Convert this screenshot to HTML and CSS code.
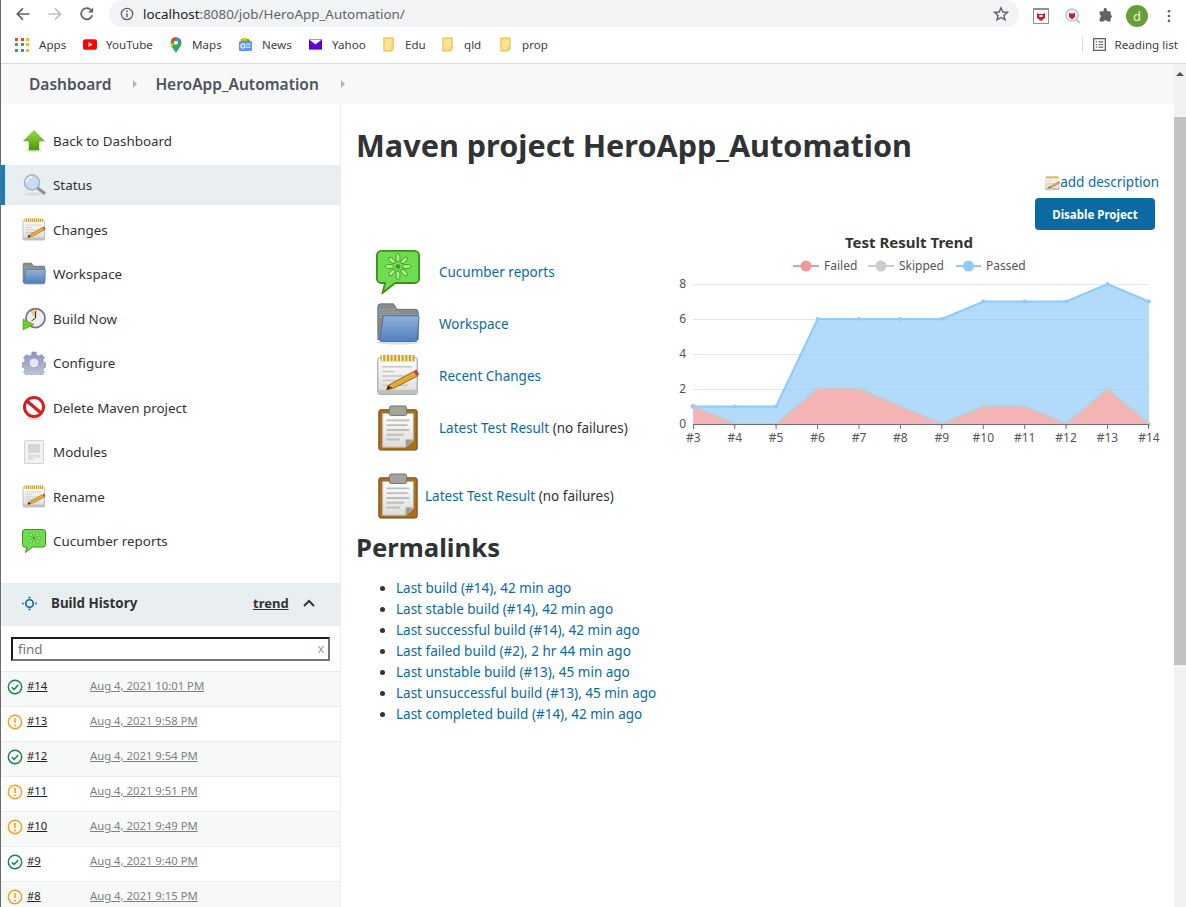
FILE: index.html
```html
<!DOCTYPE html>
<html lang="en">
<head>
<meta charset="utf-8">
<title>HeroApp_Automation</title>
<link rel="stylesheet" href="styles.css">
</head>
<body>
<svg class="defs" width="0" height="0" aria-hidden="true">
  <defs>
    <linearGradient id="gArrow" x1="0" y1="0" x2="0" y2="1"><stop offset="0" stop-color="#9bd84a"/><stop offset="1" stop-color="#4e9a06"/></linearGradient>
    <linearGradient id="gFolder" x1="0" y1="0" x2="0" y2="1"><stop offset="0" stop-color="#8fb2dc"/><stop offset="1" stop-color="#4f7fbd"/></linearGradient>
    <linearGradient id="gPaper" x1="0" y1="0" x2="0" y2="1"><stop offset="0" stop-color="#ffffff"/><stop offset="1" stop-color="#dcdcd8"/></linearGradient>
    <linearGradient id="gGear" x1="0" y1="0" x2="0" y2="1"><stop offset="0" stop-color="#8c94c0"/><stop offset="1" stop-color="#c4c7dc"/></linearGradient>
    <symbol id="i-up" viewBox="0 0 48 48">
      <ellipse cx="24" cy="43" rx="17" ry="3" fill="#ddd"/>
      <path d="M24 3 45 24H34V42H14V24H3Z" fill="url(#gArrow)" stroke="#5a9f14" stroke-width="1"/>
    </symbol>
    <symbol id="i-search" viewBox="0 0 48 48">
      <ellipse cx="22" cy="42" rx="17" ry="3.5" fill="#ddd"/>
      <path d="M30 29 44 40" stroke="#8a8f94" stroke-width="6" stroke-linecap="round"/>
      <circle cx="20" cy="19" r="15" fill="#c7dcf2" stroke="#aab4bd" stroke-width="3"/>
      <path d="M9 18a11 11 0 0 1 11-10" stroke="#fff" stroke-width="3" fill="none"/>
    </symbol>
    <symbol id="i-note" viewBox="0 0 48 48">
      <rect x="2" y="4" width="43" height="40" rx="2" fill="url(#gPaper)" stroke="#8f8f8b"/>
      <rect x="2" y="39" width="43" height="5" fill="#c0c0bc"/>
      <rect x="5" y="1" width="37" height="7" fill="#c8a43c"/>
      <path d="M7 1v7M11 1v7M15 1v7M19 1v7M23 1v7M27 1v7M31 1v7M35 1v7M39 1v7" stroke="#fff3b0" stroke-width="1.6"/>
      <path d="M7 14h32M7 19h13M7 24h25M7 29h16M7 34h28" stroke="#c6c6c2" stroke-width="1.6"/>
      <path d="M14 34 41 19l4 5-25 13-8 2Z" fill="#e9a93a" stroke="#8f5f12" stroke-width="1"/>
      <path d="M41 19l4 5 2-2-3-5Z" fill="#d63b3b"/>
      <path d="M11 39l2-5 5 3Z" fill="#4a3212"/>
    </symbol>
    <symbol id="i-folder" viewBox="0 0 48 48">
      <ellipse cx="24" cy="44" rx="23" ry="2.5" fill="#ddd"/>
      <path d="M2 5a3 3 0 0 1 3-3h14l4 6h20a3 3 0 0 1 3 3v30H2Z" fill="#888a8c" stroke="#6a6c6e"/>
      <path d="M3 8h18M3 11h22M3 14h40M3 17h40" stroke="#a2a4a6"/>
      <path d="M8 15h38l1 1-2 25a2 2 0 0 1-2 2H6a2 2 0 0 1-2-2Z" fill="url(#gFolder)" stroke="#3e6ba8"/>
    </symbol>
    <symbol id="i-build" viewBox="0 0 48 48">
      <circle cx="27" cy="22" r="19" fill="#eeedf0" stroke="#7a6f96" stroke-width="3.5"/>
      <path d="M27 22 18 8a17 17 0 0 1 11-3Z" fill="#e8d27a" stroke="#a08b3a"/>
      <path d="M27 22 19 28M27 22 27 9" stroke="#333" stroke-width="2" fill="none"/>
      <path d="M2 24 24 35 2 46Z" fill="#6ccf24" stroke="#3e8f0e"/>
    </symbol>
    <symbol id="i-gear" viewBox="0 0 48 48">
      <path d="M20 2h8l1 6 5 2 5-3 6 6-3 5 2 5 6 1v8l-6 1-2 5 3 5-6 6-5-3-5 2-1 6h-8l-1-6-5-2-5 3-6-6 3-5-2-5-6-1v-8l6-1 2-5-3-5 6-6 5 3 5-2Z" fill="url(#gGear)" stroke="#7f85ad"/>
      <circle cx="24" cy="24" r="10" fill="#e6e6f0" stroke="#9a9ebd" stroke-width="2"/>
    </symbol>
    <symbol id="i-del" viewBox="0 0 48 48">
      <ellipse cx="24" cy="45" rx="17" ry="3" fill="#ddd"/>
      <circle cx="24" cy="22" r="19" fill="#fff" stroke="#d32020" stroke-width="6"/>
      <path d="M11 11 37 33" stroke="#d32020" stroke-width="6.5"/>
    </symbol>
    <symbol id="i-mod" viewBox="0 0 48 48">
      <rect x="5" y="1" width="38" height="46" rx="1.5" fill="#f2f2f2" stroke="#c8c8c8" stroke-width="1.5"/>
      <rect x="12" y="8" width="24" height="18" fill="#d6d6d6"/>
      <rect x="12" y="29" width="11" height="11" fill="#dedede"/>
      <rect x="24" y="29" width="12" height="6" fill="#dedede"/>
    </symbol>
    <symbol id="i-cuke" viewBox="0 0 48 48">
      <path d="M6 1h36a5 5 0 0 1 5 5v25a5 5 0 0 1-5 5H21L7 47l3-11H6a5 5 0 0 1-5-5V6a5 5 0 0 1 5-5Z" fill="#6fdc52" stroke="#3f8f1c" stroke-width="2"/>
      <g fill="#a8f28c" stroke="#3c9a1e" stroke-width="1">
        <ellipse cx="24" cy="8.500" rx="2.200" ry="4.500"/>
        <ellipse cx="24" cy="27.500" rx="2.200" ry="4.500"/>
        <ellipse cx="14.500" cy="18" rx="4.500" ry="2.200"/>
        <ellipse cx="33.500" cy="18" rx="4.500" ry="2.200"/>
        <ellipse cx="17.300" cy="11.300" rx="2.200" ry="4.500" transform="rotate(-45 17.300 11.300)"/>
        <ellipse cx="30.700" cy="11.300" rx="2.200" ry="4.500" transform="rotate(45 30.700 11.300)"/>
        <ellipse cx="17.300" cy="24.700" rx="2.200" ry="4.500" transform="rotate(45 17.300 24.700)"/>
        <ellipse cx="30.700" cy="24.700" rx="2.200" ry="4.500" transform="rotate(-45 30.700 24.700)"/>
      </g>
      <circle cx="24" cy="18" r="2.500" fill="#3c9a1e"/>
    </symbol>
    <symbol id="i-clip" viewBox="3 0 42 48">
      <rect x="4" y="5" width="40" height="42" rx="2" fill="#a86f1c" stroke="#6f4710"/>
      <path d="M8 9h32v28l-8 7H8Z" fill="url(#gPaper)" stroke="#bbb"/>
      <path d="M12 16h24M12 21h22M12 26h24M12 31h18M12 36h14" stroke="#bdbdbd" stroke-width="2"/>
      <path d="M32 44V36h8Z" fill="#9b9b9b"/>
      <rect x="15" y="1" width="18" height="10" rx="2" fill="#a3a39c" stroke="#74746e"/>
    </symbol>
    <symbol id="i-ok" viewBox="0 0 16 16">
      <circle cx="8" cy="8" r="6.7" fill="none" stroke="#138347" stroke-width="1.4"/>
      <path d="M4.8 8.2 7.1 10.4 11.2 6" fill="none" stroke="#138347" stroke-width="1.5"/>
    </symbol>
    <symbol id="i-warn" viewBox="0 0 16 16">
      <circle cx="8" cy="8" r="6.7" fill="none" stroke="#fe9d17" stroke-width="1.4"/>
      <path d="M8 4v5" stroke="#fe9d17" stroke-width="1.6"/>
      <circle cx="8" cy="11.4" r="1" fill="#fe9d17"/>
    </symbol>
    <symbol id="i-bfold" viewBox="0 0 12 16">
      <path d="M1 1h10v12l-2 2H1Z" fill="#fde293" stroke="#e6c14f" stroke-width="1.2"/>
      <path d="M11 11H9v3" fill="none" stroke="#e6c14f"/>
    </symbol>
  </defs>
</svg>

<div class="window">
  <header class="chrome">
    <div class="toolbar">
      <div class="nav-icons">
        <svg class="ico16" viewBox="0 0 16 16"><path d="M14.5 8H2.5M8 2.3 2.3 8 8 13.7" fill="none" stroke="#5f6368" stroke-width="1.7"/></svg>
        <svg class="ico16" viewBox="0 0 16 16"><path d="M1.5 8h12M8 2.3 13.7 8 8 13.7" fill="none" stroke="#bdc1c6" stroke-width="1.7"/></svg>
        <svg class="ico16" viewBox="0 0 16 16"><path d="M13.2 9.2A5.6 5.6 0 1 1 11.9 4" fill="none" stroke="#5f6368" stroke-width="1.7"/><path d="M14.2 1.4v5.2H9Z" fill="#5f6368"/></svg>
      </div>
      <div class="omnibox">
        <svg class="ico-info" viewBox="0 0 14 14"><circle cx="7" cy="7" r="5.7" fill="none" stroke="#5f6368" stroke-width="1.3"/><path d="M7 6.2v4" stroke="#5f6368" stroke-width="1.4"/><circle cx="7" cy="4.2" r=".9" fill="#5f6368"/></svg>
        <span class="url"><span class="url-host">localhost</span>:8080/job/HeroApp_Automation/</span>
        <svg class="ico-star" viewBox="0 0 16 16"><path d="M8 1.8 9.8 6l4.6.4-3.5 3 1.1 4.5L8 11.5l-4 2.4L5.100 9.400l-3.500-3L6.200 6Z" fill="none" stroke="#5f6368" stroke-width="1.4"/></svg>
      </div>
      <div class="ext-icons">
        <svg class="ext ext-a" viewBox="0 0 16 16"><rect x=".5" y=".5" width="15" height="15" fill="#fff" stroke="#8a9199"/><rect x="0" y="0" width="16" height="2" fill="#8a9199"/><path d="M4 5l2 1h4l2-1v5l-4 3-4-3Z" fill="#c8202f"/><rect x="6.500" y="7" width="3" height="2" fill="#fff"/></svg>
        <svg class="ext ext-b" viewBox="0 0 16 16"><circle cx="7" cy="7" r="6" fill="#fff" stroke="#b9c6cf" stroke-width="1.600"/><path d="M11.500 11.500 15 15" stroke="#b9c6cf" stroke-width="1.800"/><path d="M4 4.500l1.500 1h3l1.500-1V9l-3 2.500L4 9Z" fill="#c8202f"/></svg>
        <svg class="ext ext-c" viewBox="0 0 16 16"><path d="M6 1.500a1.800 1.800 0 0 1 3.500 0V3.500h4v3.700a2 2 0 0 1 0 3.800v3.500H9.800a2 2 0 0 0-3.800 0H1.800v-3.800a2 2 0 0 0 0-3.700V3.500H6Z" fill="#5f6368"/></svg>
        <span class="avatar">d</span>
        <svg class="ext ext-d" viewBox="0 0 4 16"><circle cx="2" cy="2.500" r="1.500" fill="#5f6368"/><circle cx="2" cy="8" r="1.500" fill="#5f6368"/><circle cx="2" cy="13.500" r="1.500" fill="#5f6368"/></svg>
      </div>
    </div>
    <div class="bookmarks">
      <a class="bm bm-apps"><span class="apps-grid"><i class="c-r"></i><i class="c-r"></i><i class="c-y"></i><i class="c-b"></i><i class="c-g"></i><i class="c-y"></i><i class="c-g"></i><i class="c-b"></i><i class="c-y"></i></span>Apps</a>
      <a class="bm bm-yt"><svg class="bm-ico" viewBox="0 0 16 12"><rect width="16" height="12" rx="3" fill="#f00"/><path d="M6.300 3.200 11 6 6.300 8.800Z" fill="#fff"/></svg>YouTube</a>
      <a class="bm bm-maps"><svg class="bm-ico bm-pin" viewBox="0 0 12 16"><path d="M6 16C3 11 .5 9 .5 5.700a5.500 5.500 0 0 1 11 0C11.500 9 9 11 6 16Z" fill="#34a853"/><path d="M1 3.500A5.500 5.500 0 0 1 6 .2V4Z" fill="#ea4335"/><path d="M6 .2a5.500 5.500 0 0 1 4.500 2.500L8 5Z" fill="#4285f4"/><path d="M.5 5.700 4 7 2 10C1 8.500.5 7 .5 5.700Z" fill="#fbbc04"/><circle cx="6" cy="5.700" r="2" fill="#fff"/></svg>Maps</a>
      <a class="bm bm-news"><svg class="bm-ico" viewBox="0 0 14 14"><path d="M2 1h8l2 2v2H2Z" fill="#34a853"/><path d="M3 0h5l1 3H3Z" fill="#fbbc04"/><rect y="3.500" width="14" height="10.500" rx="1" fill="#5e97f6"/><rect x="7.500" y="6" width="5" height="1.500" fill="#cfe0fb"/><rect x="7.500" y="9" width="5" height="1.500" fill="#cfe0fb"/><circle cx="4.200" cy="8.500" r="2.200" fill="none" stroke="#fff" stroke-width="1.200"/></svg>News</a>
      <a class="bm bm-yahoo"><svg class="bm-ico" viewBox="0 0 14 11"><rect width="14" height="11" fill="#5f01d1"/><path d="M.5.500 7 5.500 13.500.500" fill="#fff"/></svg>Yahoo</a>
      <a class="bm bm-f1"><svg class="bm-ico bm-fold"><use href="#i-bfold"/></svg>Edu</a>
      <a class="bm bm-f2"><svg class="bm-ico bm-fold"><use href="#i-bfold"/></svg>qld</a>
      <a class="bm bm-f3"><svg class="bm-ico bm-fold"><use href="#i-bfold"/></svg>prop</a>
      <div class="reading">
        <svg class="bm-ico rl-ico" viewBox="0 0 14 14"><rect x=".7" y=".7" width="12.600" height="12.600" fill="none" stroke="#5f6368" stroke-width="1.400"/><path d="M3 4.200h1.500M6 4.200h5M3 7h1.500M6 7h5M3 9.800h1.500M6 9.800h5" stroke="#5f6368" stroke-width="1.300"/></svg>
        Reading list
      </div>
    </div>
  </header>

  <div class="viewport">
    <div class="page">
      <nav class="breadcrumb">
        <a class="crumb crumb-first">Dashboard</a><span class="tri"></span>
        <a class="crumb">HeroApp_Automation</a><span class="tri"></span>
      </nav>
      <div class="columns">
        <aside class="sidebar">
          <ul class="tasks">
            <li class="task"><svg class="task-ico"><use href="#i-up"/></svg>Back to Dashboard</li>
            <li class="task task-active"><svg class="task-ico"><use href="#i-search"/></svg>Status</li>
            <li class="task"><svg class="task-ico"><use href="#i-note"/></svg>Changes</li>
            <li class="task"><svg class="task-ico"><use href="#i-folder"/></svg>Workspace</li>
            <li class="task"><svg class="task-ico"><use href="#i-build"/></svg>Build Now</li>
            <li class="task"><svg class="task-ico"><use href="#i-gear"/></svg>Configure</li>
            <li class="task"><svg class="task-ico"><use href="#i-del"/></svg>Delete Maven project</li>
            <li class="task"><svg class="task-ico"><use href="#i-mod"/></svg>Modules</li>
            <li class="task"><svg class="task-ico"><use href="#i-note"/></svg>Rename</li>
            <li class="task"><svg class="task-ico"><use href="#i-cuke"/></svg>Cucumber reports</li>
          </ul>
          <section class="history">
            <div class="history-head">
              <svg class="hist-ico" viewBox="0 0 16 16"><circle cx="8" cy="8" r="4" fill="none" stroke="#0b6aa2" stroke-width="1.800"/><path d="M8 .3 6.300 2.300h3.400ZM8 15.700l-1.700-2h3.400ZM.5 6.200v3.600l1.700-1.800ZM15.500 6.200v3.600L13.800 8Z" fill="#0b6aa2"/></svg>
              <span class="hist-title">Build History</span>
              <a class="hist-trend">trend</a>
              <svg class="hist-chev" viewBox="0 0 12 8"><path d="M1 7 6 2l5 5" fill="none" stroke="#333" stroke-width="2"/></svg>
            </div>
            <div class="find-wrap">
              <div class="find"><span>find</span><span class="find-x">x</span></div>
            </div>
            <ul class="builds">
              <li class="build"><svg class="b-ico"><use href="#i-ok"/></svg><a class="b-num">#14</a><a class="b-date">Aug 4, 2021 10:01 PM</a></li>
              <li class="build"><svg class="b-ico"><use href="#i-warn"/></svg><a class="b-num">#13</a><a class="b-date">Aug 4, 2021 9:58 PM</a></li>
              <li class="build"><svg class="b-ico"><use href="#i-ok"/></svg><a class="b-num">#12</a><a class="b-date">Aug 4, 2021 9:54 PM</a></li>
              <li class="build"><svg class="b-ico"><use href="#i-warn"/></svg><a class="b-num">#11</a><a class="b-date">Aug 4, 2021 9:51 PM</a></li>
              <li class="build"><svg class="b-ico"><use href="#i-warn"/></svg><a class="b-num">#10</a><a class="b-date">Aug 4, 2021 9:49 PM</a></li>
              <li class="build"><svg class="b-ico"><use href="#i-ok"/></svg><a class="b-num">#9</a><a class="b-date">Aug 4, 2021 9:40 PM</a></li>
              <li class="build"><svg class="b-ico"><use href="#i-warn"/></svg><a class="b-num">#8</a><a class="b-date">Aug 4, 2021 9:15 PM</a></li>
            </ul>
          </section>
        </aside>
        <main class="main">
          <h1 class="title">Maven project HeroApp_Automation</h1>
          <div class="desc-row"><svg class="desc-ico"><use href="#i-note"/></svg><a class="link">add description</a></div>
          <div class="btn-row"><button class="btn">Disable Project</button></div>
          <div class="content-row">
            <div class="actions">
              <div class="action"><svg class="action-ico"><use href="#i-cuke"/></svg><a class="link">Cucumber reports</a></div>
              <div class="action"><svg class="action-ico"><use href="#i-folder"/></svg><a class="link">Workspace</a></div>
              <div class="action"><svg class="action-ico"><use href="#i-note"/></svg><a class="link">Recent Changes</a></div>
              <div class="action"><svg class="action-ico clip-ico"><use href="#i-clip"/></svg><span><a class="link">Latest Test Result</a> (no failures)</span></div>
            </div>
            <div class="chart">
              <svg class="chart-svg" viewBox="0 0 516 225">
                <g stroke="#e0e6f1" stroke-width="1">
                  <path d="M23 59.500H479M23 94.500H479M23 129.500H479M23 164.500H479"/>
                </g>
                <path d="M23.300 181.500 64.700 181.500 106.100 181.500 147.600 94 189 94 230.400 94 271.800 94 313.300 76.500 354.700 76.500 396.100 76.500 437.500 59 479 76.500V199H23.300Z" fill="#90caf9" fill-opacity=".7"/>
                <path d="M23.300 181.500 64.700 199 106.100 199 147.600 164 189 164 230.400 181.500 271.800 199 313.300 181.500 354.700 181.500 396.100 199 437.500 164 479 199H23.300Z" fill="#f4b4b4"/>
                <path d="M23.300 181.500 64.700 181.500 106.100 181.500 147.600 94 189 94 230.400 94 271.800 94 313.300 76.500 354.700 76.500 396.100 76.500 437.500 59 479 76.500" fill="none" stroke="#90caf9" stroke-width="2"/>
                <g fill="#90caf9">
                  <circle cx="23.300" cy="181.500" r="2.500"/><circle cx="64.700" cy="181.500" r="2"/><circle cx="106.100" cy="181.500" r="2"/><circle cx="147.600" cy="94" r="2"/><circle cx="189" cy="94" r="2"/><circle cx="230.400" cy="94" r="2"/><circle cx="271.800" cy="94" r="2"/><circle cx="313.300" cy="76.500" r="2"/><circle cx="354.700" cy="76.500" r="2"/><circle cx="396.100" cy="76.500" r="2"/><circle cx="437.500" cy="59" r="2"/><circle cx="479" cy="76.500" r="2"/>
                </g>
                <path d="M23.300 181.500 64.700 199 106.100 199 147.600 164 189 164 230.400 181.500 271.800 199 313.300 181.500 354.700 181.500 396.100 199 437.500 164 479 199" fill="none" stroke="#c8c8c8" stroke-width="2"/>
                <g fill="#cccccc">
                  <circle cx="64.700" cy="199" r="2"/><circle cx="106.100" cy="199" r="2"/><circle cx="147.600" cy="164" r="2"/><circle cx="189" cy="164" r="2"/><circle cx="230.400" cy="181.500" r="2"/><circle cx="271.800" cy="199" r="2"/><circle cx="313.300" cy="181.500" r="2"/><circle cx="354.700" cy="181.500" r="2"/><circle cx="396.100" cy="199" r="2"/><circle cx="437.500" cy="164" r="2"/><circle cx="479" cy="199" r="2"/>
                </g>
                <path d="M23 199.500H479" stroke="#6e7079" stroke-width="1"/>
                <path d="M23.500 199V204M64.700 199V204M106.100 199V204M147.600 199V204M189 199V204M230.400 199V204M271.800 199V204M313.300 199V204M354.700 199V204M396.100 199V204M437.500 199V204M478.500 199V204" stroke="#6e7079" stroke-width="1"/>
                <text class="chart-title" x="239" y="23" text-anchor="middle">Test Result Trend</text>
                <path d="M123 41H149" stroke="#ef9a9a" stroke-width="2"/><circle cx="136" cy="41" r="5.500" fill="#ef9a9a"/>
                <text class="chart-label" x="154" y="45">Failed</text>
                <path d="M198 41H224" stroke="#cccccc" stroke-width="2"/><circle cx="211" cy="41" r="5.500" fill="#cccccc"/>
                <text class="chart-label" x="229" y="45">Skipped</text>
                <path d="M286 41H311" stroke="#90caf9" stroke-width="2"/><circle cx="298.500" cy="41" r="5.500" fill="#90caf9"/>
                <text class="chart-label" x="316" y="45">Passed</text>
                <g class="chart-label" text-anchor="end">
                  <text x="16" y="63">8</text><text x="16" y="98">6</text><text x="16" y="133">4</text><text x="16" y="168">2</text><text x="16" y="203">0</text>
                </g>
                <g class="chart-label" text-anchor="middle">
                  <text x="23.300" y="217">#3</text><text x="64.700" y="217">#4</text><text x="106.100" y="217">#5</text><text x="147.600" y="217">#6</text><text x="189" y="217">#7</text><text x="230.400" y="217">#8</text><text x="271.800" y="217">#9</text><text x="313.300" y="217">#10</text><text x="354.700" y="217">#11</text><text x="396.100" y="217">#12</text><text x="437.500" y="217">#13</text><text x="479" y="217">#14</text>
                </g>
              </svg>
            </div>
          </div>
          <div class="action action-solo"><svg class="action-ico clip-ico"><use href="#i-clip"/></svg><span><a class="link">Latest Test Result</a> (no failures)</span></div>
          <h2 class="perma-title">Permalinks</h2>
          <ul class="permalinks">
            <li><a class="link">Last build (#14), 42 min ago</a></li>
            <li><a class="link">Last stable build (#14), 42 min ago</a></li>
            <li><a class="link">Last successful build (#14), 42 min ago</a></li>
            <li><a class="link">Last failed build (#2), 2 hr 44 min ago</a></li>
            <li><a class="link">Last unstable build (#13), 45 min ago</a></li>
            <li><a class="link">Last unsuccessful build (#13), 45 min ago</a></li>
            <li><a class="link">Last completed build (#14), 42 min ago</a></li>
          </ul>
        </main>
      </div>
    </div>
    <div class="scrollbar">
      <span class="sb-arrow"></span>
      <span class="sb-thumb"></span>
    </div>
  </div>
</div>
</body>
</html>
```

FILE: styles.css
```css
* { box-sizing: border-box; }
html, body { margin: 0; padding: 0; height: 100%; overflow: hidden; }
body { font-family: "Noto Sans", "Open Sans", sans-serif; font-size: 13.4px; color: #333; background: #fff; }
.defs { position: absolute; }
ul { list-style: none; margin: 0; padding: 0; }
a { color: inherit; }

.window { height: 907px; display: flex; flex-direction: column; border-left: 1px solid #6a6a6a; }

/* Browser chrome */
.chrome { height: 64px; flex: none; border-bottom: 1px solid #dadce0; background: #fff; }
.toolbar { height: 30px; display: flex; align-items: flex-start; }
.nav-icons { width: 108px; display: flex; gap: 16px; padding: 6px 0 0 14px; flex: none; }
.ico16 { width: 16px; height: 16px; flex: none; }
.omnibox { width: 910px; height: 27px; background: #f1f3f4; border-radius: 14px; display: flex; align-items: center; padding: 0 10px 0 11px; flex: none; font-size: 13.4px; color: #5f6368; }
.ico-info { width: 14px; height: 14px; margin-right: 9px; flex: none; }
.url { flex: 1; }
.url-host { color: #202124; }
.ico-star { width: 16px; height: 16px; flex: none; }
.ext-icons { display: flex; align-items: center; padding: 4px 0 0 14px; height: 27px; flex: none; }
.ext { flex: none; }
.ext-a { width: 16px; height: 16px; }
.ext-b { width: 16px; height: 16px; margin-left: 16px; }
.ext-c { width: 15px; height: 15px; margin-left: 17px; }
.avatar { width: 22px; height: 22px; border-radius: 50%; background: #689f38; color: #e8f3dd; font-size: 13px; display: flex; align-items: center; justify-content: center; margin-left: 13px; flex: none; }
.ext-d { width: 4px; height: 14px; margin-left: 19px; }

.bookmarks { height: 33px; display: flex; align-items: center; padding: 0 0 4px 14px; font-size: 11.6px; color: #3c4043; }
.bm { display: flex; align-items: center; flex: none; }
.bm-ico { width: 13px; height: 13px; margin-right: 10px; flex: none; }
.apps-grid { width: 15px; height: 14px; display: grid; grid-template-columns: repeat(3, 3px); gap: 2.5px; margin-right: 9px; }
.apps-grid i { display: block; height: 3px; }
.c-r { background: #ea4335; } .c-y { background: #fbbc04; } .c-b { background: #4285f4; } .c-g { background: #34a853; }
.bm-apps { width: 68px; }
.bm-yt { width: 87px; }
.bm-yt .bm-ico { width: 14px; height: 11px; margin-right: 9px; }
.bm-maps { width: 69px; }
.bm-pin { width: 12px; height: 16px; margin-right: 10px; }
.bm-news { width: 70px; }
.bm-yahoo { width: 74px; }
.bm-yahoo .bm-ico { height: 11px; }
.bm-fold { width: 11px; height: 15px; margin-right: 11px; }
.bm-f1 { width: 59px; }
.bm-f2 { width: 58px; }
.bm-f3 { width: 60px; }
.reading { margin-left: auto; display: flex; align-items: center; padding: 0 8px 0 10px; height: 16px; border-left: 1px solid #dadce0; }
.rl-ico { margin-right: 9px; }

/* Page */
.viewport { flex: 1; min-height: 0; display: flex; overflow: hidden; }
.page { flex: 1; min-width: 0; display: flex; flex-direction: column; }
.scrollbar { width: 12px; flex: none; background: #f1f1f1; display: flex; flex-direction: column; align-items: center; }
.sb-arrow { margin-top: 8px; width: 0; height: 0; border-left: 4px solid transparent; border-right: 4px solid transparent; border-bottom: 4px solid #505050; flex: none; }
.sb-thumb { width: 12px; height: 548px; margin-top: 41px; background: #c1c1c1; flex: none; }

.breadcrumb { height: 40px; flex: none; background: #f8f8f8; display: flex; align-items: center; padding-left: 28px; font-size: 15.5px; font-weight: 600; color: #4d545d; }
.tri { width: 0; height: 0; border-left: 4px solid #b5b5b5; border-top: 4px solid transparent; border-bottom: 4px solid transparent; margin: 0 18px 0 22px; }
.columns { flex: 1; min-height: 0; display: flex; }

/* Sidebar */
.sidebar { width: 340px; flex: none; border-right: 1px solid #ececec; overflow: hidden; }
.tasks { padding-top: 17px; display: flex; flex-direction: column; gap: 4.45px; }
.task { height: 40px; display: flex; align-items: center; padding-left: 18px; border-left: 3px solid transparent; }
.task-active { background: #e9eef1; border-left: 4px solid #0a80c8; padding-left: 17px; }
.task-ico { width: 24px; height: 24px; margin-right: 7px; flex: none; }
.history { margin-top: 22px; }
.history-head { height: 43px; background: #e9eef1; display: flex; align-items: center; padding: 0 0 2px 21px; }
.hist-ico { width: 15px; height: 15px; margin-right: 14px; flex: none; }
.hist-title { font-weight: 700; flex: none; width: 202px; color: #333; }
.hist-trend { font-weight: 700; font-size: 13px; text-decoration: underline; }
.hist-chev { width: 12px; height: 8px; margin-left: 14px; }
.find-wrap { padding: 11px 10px 10px 10px; }
.find { height: 24px; border: 2px solid #1c1c1c; border-right-color: #767676; border-bottom-color: #767676; padding: 0 4px 0 5px; display: flex; justify-content: space-between; align-items: center; color: #757575; }
.find-x { color: #9a9a9a; font-size: 12px; }
.builds { border-top: 1px solid #e9eaea; }
.build { height: 35px; display: flex; align-items: flex-start; padding: 5px 0 0 6px; border-bottom: 1px solid #ececec; font-size: 11.3px; line-height: 17px; }
.build:nth-child(odd) { background: #f7f8f8; }
.b-ico { width: 16px; height: 16px; margin-top: 2px; flex: none; margin-right: 4px; }
.b-num { width: 63px; flex: none; color: #222; text-decoration: underline; }
.b-date { color: #808080; text-decoration: underline; }

/* Main */
.main { flex: 1; min-width: 0; padding: 0 0 0 15px; color: #333; font-size: 13.5px; }
.link { color: #0b6aa2; }
.title { margin: 0; padding-top: 19px; height: 62px; font-size: 30.6px; line-height: 44px; font-weight: 700; color: #2f3336; }
.desc-row { display: flex; justify-content: flex-end; align-items: center; height: 23px; padding-right: 15px; margin-top: 4px; }
.desc-ico { width: 15px; height: 15px; margin-top: 3px; }
.btn-row { display: flex; justify-content: flex-end; padding: 5px 19px 0 0; }
.btn { width: 120px; height: 32px; background: #0b6aa2; color: #fff; border: 0; border-radius: 4px; font: 700 11.5px "Noto Sans", sans-serif; }
.content-row { display: flex; height: 243px; }
.actions { width: 314px; flex: none; padding: 16px 0 0 20px; }
.action { height: 52px; display: flex; align-items: center; }
.action-ico { width: 44px; height: 44px; margin-right: 19px; flex: none; }
.clip-ico { height: 46px; }
.chart { flex: 1; min-width: 0; }
.chart-svg { display: block; width: 516px; height: 225px; margin-top: -5px; }
.chart-title { font: 700 15px "Noto Sans", sans-serif; fill: #333; }
.chart-label { font: 12px "Noto Sans", sans-serif; fill: #555; }
.action-solo { height: 46px; padding-left: 20px; }
.action-solo .action-ico { margin-right: 5px; }
.perma-title { margin: 12px 0 0; font-size: 25.7px; line-height: 34px; font-weight: 700; color: #2f3336; }
.permalinks { margin-top: 13px; padding-left: 40px; list-style: disc; }
.permalinks li { height: 21px; line-height: 21px; }
```
